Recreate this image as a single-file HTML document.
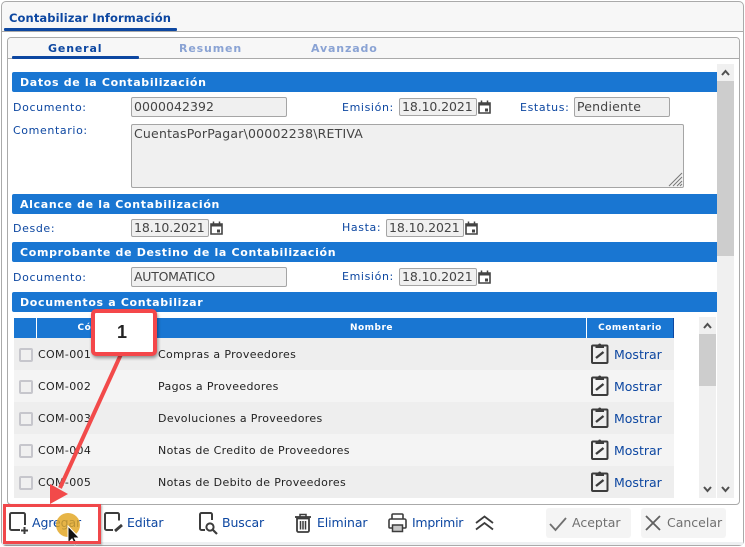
<!DOCTYPE html>
<html><head><meta charset="utf-8">
<style>
html,body{margin:0;padding:0;background:#fff}
#p{position:relative;width:745px;height:547px;overflow:hidden;background:#fff;font-family:"DejaVu Sans",sans-serif}
#p div,#p span.a{position:absolute;box-sizing:border-box;white-space:nowrap}
.sec{left:12px;width:705px;height:20px;background:#1976d2;color:#fff;font:bold 11px/22px "DejaVu Sans",sans-serif;letter-spacing:.66px;padding-left:8px;border-radius:2px 0 0 2px}
.lb{font:11px/14px "DejaVu Sans",sans-serif;letter-spacing:.62px;color:#0d47a1}
.in{background:#f0f0f0;border:1px solid #a5a5a5;border-radius:2px;color:#444;font:12.5px/18px "DejaVu Sans",sans-serif;letter-spacing:-.25px;padding-left:2px;height:20px}
.dt{width:78px;height:18px;line-height:16px;letter-spacing:-.1px}
.row{left:14px;width:660px;height:32px}
.cb{left:19px;width:14px;height:14px;background:#f0f0f0;border:2px solid #c6c6cc;border-radius:2px}
.t{font:11px/14px "DejaVu Sans",sans-serif;color:#222;letter-spacing:.35px}
.m{left:614px;font:12.5px/16px "DejaVu Sans",sans-serif;color:#0d47a1;letter-spacing:0}
.b{font:12.5px/16px "DejaVu Sans",sans-serif;color:#0d47a1;letter-spacing:-.1px}
.th{top:318px;height:20px;background:#1976d2;color:#fff;font:bold 9px/21px "DejaVu Sans",sans-serif;letter-spacing:.5px;text-align:center}
.tab{top:41px;font:bold 11px/16px "DejaVu Sans",sans-serif;letter-spacing:.85px}
svg{position:absolute;overflow:visible}
</style></head><body><div id="p">
<div style="left:1px;top:1px;width:743px;height:545px;border:1px solid #aaa;border-radius:5px;background:#f7f7f7"></div>
<div style="left:2px;top:32px;width:741px;height:510px;background:#fff"></div>
<div style="left:2px;top:542px;width:741px;height:3px;background:#eef0f2"></div>
<div style="left:2px;top:31px;width:741px;height:1px;background:#aaa"></div>
<div style="left:9px;top:10px;font:bold 11.5px/16px 'DejaVu Sans',sans-serif;color:#0d47a1;letter-spacing:.1px">Contabilizar Información</div>
<div style="left:4px;top:28px;width:173px;height:3px;background:#0d47a1;border-radius:1px"></div>

<div style="left:7px;top:37px;width:733px;height:468px;border:1px solid #aaa;border-radius:4px;background:#fff"></div>
<div style="left:8px;top:38px;width:731px;height:21px;background:#f7f7f7;border-bottom:1px solid #aaa;border-radius:3px 3px 0 0"></div>
<div style="left:12px;top:56px;width:127px;height:3px;background:#0d47a1;border-radius:1px"></div>
<div class="tab" style="left:48px;color:#0d47a1">General</div>
<div class="tab" style="left:179px;color:#8aa3d4">Resumen</div>
<div class="tab" style="left:311px;color:#8aa3d4">Avanzado</div>

<div style="left:717px;top:64px;width:17px;height:434px;background:#f0f0f0"></div>
<div style="left:717px;top:81px;width:17px;height:175px;background:#cdcdcd"></div>
<svg style="left:717px;top:64px" width="17" height="17"><path d="M5 11l3.500-4 3.500 4" fill="none" stroke="#505050" stroke-width="2"/></svg>
<svg style="left:717px;top:481px" width="17" height="17"><path d="M5 6l3.500 4 3.500-4" fill="none" stroke="#505050" stroke-width="2"/></svg>

<div class="sec" style="top:72px">Datos de la Contabilización</div>
<div class="lb" style="left:13px;top:101px">Documento:</div>
<div class="in" style="left:131px;top:97px;width:156px;letter-spacing:.05px">0000042392</div>
<div class="lb" style="left:342px;top:101px">Emisión:</div>
<div class="in dt" style="left:399px;top:98px">18.10.2021</div>
<svg style="left:478px;top:100px" width="14" height="14"><path d="M1 3h11v10H1z" fill="none" stroke="#444" stroke-width="1.6"/><path d="M1 2.500h11v3H1z" fill="#444"/><path d="M3.500 0.500v2M9.500 0.500v2" stroke="#444" stroke-width="1.500"/><rect x="7" y="8.500" width="3" height="3" fill="#444"/></svg>
<div class="lb" style="left:520px;top:101px">Estatus:</div>
<div class="in" style="left:574px;top:97px;width:96px;letter-spacing:.2px">Pendiente</div>
<div class="lb" style="left:13px;top:124px">Comentario:</div>
<div class="in" style="left:131px;top:124px;width:553px;height:64px;letter-spacing:.2px">CuentasPorPagar\00002238\RETIVA</div>
<svg style="left:667px;top:171px" width="16" height="16"><path d="M2 15L15 2M6 15l9-9M10 15l5-5M13 15l2-2" stroke="#777" stroke-width="1"/></svg>

<div class="sec" style="top:194px">Alcance de la Contabilización</div>
<div class="lb" style="left:13px;top:222px">Desde:</div>
<div class="in dt" style="left:131px;top:219px">18.10.2021</div>
<svg style="left:210px;top:221px" width="14" height="14"><path d="M1 3h11v10H1z" fill="none" stroke="#444" stroke-width="1.6"/><path d="M1 2.500h11v3H1z" fill="#444"/><path d="M3.500 0.500v2M9.500 0.500v2" stroke="#444" stroke-width="1.500"/><rect x="7" y="8.500" width="3" height="3" fill="#444"/></svg>
<div class="lb" style="left:342px;top:221px">Hasta:</div>
<div class="in dt" style="left:386px;top:219px">18.10.2021</div>
<svg style="left:465px;top:221px" width="14" height="14"><path d="M1 3h11v10H1z" fill="none" stroke="#444" stroke-width="1.6"/><path d="M1 2.500h11v3H1z" fill="#444"/><path d="M3.500 0.500v2M9.500 0.500v2" stroke="#444" stroke-width="1.500"/><rect x="7" y="8.500" width="3" height="3" fill="#444"/></svg>

<div class="sec" style="top:242px">Comprobante de Destino de la Contabilización</div>
<div class="lb" style="left:13px;top:271px">Documento:</div>
<div class="in" style="left:131px;top:267px;width:156px">AUTOMATICO</div>
<div class="lb" style="left:342px;top:270px">Emisión:</div>
<div class="in dt" style="left:399px;top:268px">18.10.2021</div>
<svg style="left:478px;top:270px" width="14" height="14"><path d="M1 3h11v10H1z" fill="none" stroke="#444" stroke-width="1.6"/><path d="M1 2.500h11v3H1z" fill="#444"/><path d="M3.500 0.500v2M9.500 0.500v2" stroke="#444" stroke-width="1.500"/><rect x="7" y="8.500" width="3" height="3" fill="#444"/></svg>

<div class="sec" style="top:292px">Documentos a Contabilizar</div>

<div class="th" style="left:14px;width:22px"></div>
<div class="th" style="left:37px;width:119px">Código</div>
<div class="th" style="left:157px;width:429px">Nombre</div>
<div class="th" style="left:587px;width:87px;border-right:1px solid #0d47a1">Comentario</div>

<div class="row" style="top:338px;background:#eee"></div>
<div class="row" style="top:370px;background:#f4f4f4"></div>
<div class="row" style="top:402px;background:#eee"></div>
<div class="row" style="top:434px;background:#f4f4f4"></div>
<div class="row" style="top:466px;background:#eee"></div>

<div class="cb" style="top:348px"></div><div class="t" style="left:38px;top:348px">COM-001</div><div class="t" style="left:158px;top:348px">Compras a Proveedores</div>
<div class="cb" style="top:380px"></div><div class="t" style="left:38px;top:380px">COM-002</div><div class="t" style="left:158px;top:380px">Pagos a Proveedores</div>
<div class="cb" style="top:412px"></div><div class="t" style="left:38px;top:412px">COM-003</div><div class="t" style="left:158px;top:412px">Devoluciones a Proveedores</div>
<div class="cb" style="top:444px"></div><div class="t" style="left:38px;top:444px">COM-004</div><div class="t" style="left:158px;top:444px">Notas de Credito de Proveedores</div>
<div class="cb" style="top:476px"></div><div class="t" style="left:38px;top:476px">COM-005</div><div class="t" style="left:158px;top:476px">Notas de Debito de Proveedores</div>

<svg style="left:591px;top:342px" width="18" height="22"><path d="M5 3.500H2a1 1 0 0 0-1 1v15.500a1 1 0 0 0 1 1h13.500a1 1 0 0 0 1-1V4.500a1 1 0 0 0-1-1h-3" fill="none" stroke="#3c3c3c" stroke-width="2"/><path d="M4.500 6V2.500h2.700a1.600 1.600 0 0 1 3 0h2.800V6z" fill="#3c3c3c"/><path d="M5 16l7.500-6" stroke="#3c3c3c" stroke-width="2.400"/></svg><div class="m" style="top:347px">Mostrar</div>
<svg style="left:591px;top:374px" width="18" height="22"><path d="M5 3.500H2a1 1 0 0 0-1 1v15.500a1 1 0 0 0 1 1h13.500a1 1 0 0 0 1-1V4.500a1 1 0 0 0-1-1h-3" fill="none" stroke="#3c3c3c" stroke-width="2"/><path d="M4.500 6V2.500h2.700a1.600 1.600 0 0 1 3 0h2.800V6z" fill="#3c3c3c"/><path d="M5 16l7.500-6" stroke="#3c3c3c" stroke-width="2.400"/></svg><div class="m" style="top:379px">Mostrar</div>
<svg style="left:591px;top:406px" width="18" height="22"><path d="M5 3.500H2a1 1 0 0 0-1 1v15.500a1 1 0 0 0 1 1h13.500a1 1 0 0 0 1-1V4.500a1 1 0 0 0-1-1h-3" fill="none" stroke="#3c3c3c" stroke-width="2"/><path d="M4.500 6V2.500h2.700a1.600 1.600 0 0 1 3 0h2.800V6z" fill="#3c3c3c"/><path d="M5 16l7.500-6" stroke="#3c3c3c" stroke-width="2.400"/></svg><div class="m" style="top:411px">Mostrar</div>
<svg style="left:591px;top:438px" width="18" height="22"><path d="M5 3.500H2a1 1 0 0 0-1 1v15.500a1 1 0 0 0 1 1h13.500a1 1 0 0 0 1-1V4.500a1 1 0 0 0-1-1h-3" fill="none" stroke="#3c3c3c" stroke-width="2"/><path d="M4.500 6V2.500h2.700a1.600 1.600 0 0 1 3 0h2.800V6z" fill="#3c3c3c"/><path d="M5 16l7.500-6" stroke="#3c3c3c" stroke-width="2.400"/></svg><div class="m" style="top:443px">Mostrar</div>
<svg style="left:591px;top:470px" width="18" height="22"><path d="M5 3.500H2a1 1 0 0 0-1 1v15.500a1 1 0 0 0 1 1h13.500a1 1 0 0 0 1-1V4.500a1 1 0 0 0-1-1h-3" fill="none" stroke="#3c3c3c" stroke-width="2"/><path d="M4.500 6V2.500h2.700a1.600 1.600 0 0 1 3 0h2.800V6z" fill="#3c3c3c"/><path d="M5 16l7.500-6" stroke="#3c3c3c" stroke-width="2.400"/></svg><div class="m" style="top:475px">Mostrar</div>

<div style="left:699px;top:317px;width:17px;height:181px;background:#f0f0f0"></div>
<div style="left:699px;top:334px;width:17px;height:52px;background:#cdcdcd"></div>
<svg style="left:699px;top:317px" width="17" height="17"><path d="M5 11l3.500-4 3.500 4" fill="none" stroke="#505050" stroke-width="2"/></svg>
<svg style="left:699px;top:481px" width="17" height="17"><path d="M5 6l3.500 4 3.500-4" fill="none" stroke="#505050" stroke-width="2"/></svg>

<svg style="left:9px;top:512px" width="20" height="24"><path d="M11 18H2.500a1.500 1.500 0 0 1-1.500-1.500V2.500A1.500 1.500 0 0 1 2.500 1h12A1.500 1.500 0 0 1 16 2.500V13" fill="none" stroke="#3c3c3c" stroke-width="2"/><path d="M15.500 15v7M12 18.500h7" stroke="#3c3c3c" stroke-width="2"/></svg>
<div class="b" style="left:32px;top:515px">Agregar</div>
<svg style="left:104px;top:512px" width="20" height="24"><path d="M9 18H2.500A1.500 1.500 0 0 1 1 16.500V2.500A1.500 1.500 0 0 1 2.500 1h11A1.500 1.500 0 0 1 15 2.500v6" fill="none" stroke="#3c3c3c" stroke-width="2"/><path d="M11 19l7-6" stroke="#3c3c3c" stroke-width="2.800"/></svg>
<div class="b" style="left:127px;top:515px">Editar</div>
<svg style="left:199px;top:512px" width="20" height="24"><path d="M6 18H2.500A1.500 1.500 0 0 1 1 16.500V2.500A1.500 1.500 0 0 1 2.500 1h9A1.500 1.500 0 0 1 13 2.500V8" fill="none" stroke="#3c3c3c" stroke-width="2"/><circle cx="11" cy="15" r="3.600" fill="none" stroke="#3c3c3c" stroke-width="2"/><path d="M14 18l4 4" stroke="#3c3c3c" stroke-width="2.200"/></svg>
<div class="b" style="left:222px;top:515px">Buscar</div>
<svg style="left:294px;top:513px" width="18" height="20"><path d="M1 4h16" stroke="#3c3c3c" stroke-width="1.800"/><path d="M6 3.500V1.500h6v2" fill="none" stroke="#3c3c3c" stroke-width="1.500"/><path d="M3 5.500h12v12a1.500 1.500 0 0 1-1.500 1.500h-9A1.500 1.500 0 0 1 3 17.500z" fill="none" stroke="#3c3c3c" stroke-width="1.800"/><path d="M6.500 8v8.500M9 8v8.500M11.500 8v8.500" stroke="#3c3c3c" stroke-width="1.500"/></svg>
<div class="b" style="left:317px;top:515px">Eliminar</div>
<svg style="left:388px;top:513px" width="20" height="20"><path d="M4 6V2a1 1 0 0 1 1-1h9a1 1 0 0 1 1 1v4" fill="none" stroke="#3c3c3c" stroke-width="1.600"/><path d="M5 15H2a1 1 0 0 1-1-1V7.500a1.500 1.500 0 0 1 1.500-1.500h14A1.500 1.500 0 0 1 18 7.500V14a1 1 0 0 1-1 1h-3" fill="none" stroke="#3c3c3c" stroke-width="1.600"/><rect x="4.500" y="12" width="10" height="6.500" fill="#c8c8c8" stroke="#3c3c3c" stroke-width="1.500"/></svg>
<div class="b" style="left:412px;top:515px;letter-spacing:-.25px">Imprimir</div>
<svg style="left:474px;top:514px" width="20" height="18"><path d="M2 9l8.500-6.500L19 9M2 15.500L10.500 9 19 15.500" fill="none" stroke="#3c3c3c" stroke-width="1.800"/></svg>

<div style="left:546px;top:508px;width:85px;height:30px;background:#f4f4f4;border-radius:3px"></div>
<svg style="left:549px;top:516px" width="18" height="16"><path d="M1 8l5.500 6L17 2" fill="none" stroke="#707070" stroke-width="1.800"/></svg>
<div class="b" style="left:572px;top:515px;color:#707070;letter-spacing:0">Aceptar</div>
<div style="left:641px;top:508px;width:85px;height:30px;background:#f4f4f4;border-radius:3px"></div>
<svg style="left:645px;top:515px" width="16" height="16"><path d="M1 1l14 14M15 1L1 15" stroke="#606060" stroke-width="1.800"/></svg>
<div class="b" style="left:667px;top:515px;color:#707070;letter-spacing:0">Cancelar</div>

<div style="left:56px;top:513px;width:24px;height:24px;border-radius:50%;background:rgba(226,165,30,.82)"></div>
<svg style="left:0;top:0" width="745" height="547">
<path d="M122 352L60 488" stroke="#f24a4a" stroke-width="4" fill="none"/>
<path d="M50 504V484l18 10z" fill="#f24a4a"/>
<path d="M68 526v17l4-4 3 6 2.500-1-3-6h5z" fill="#111" stroke="#fff" stroke-width="1"/>
</svg>
<div style="left:3px;top:504px;width:98px;height:40px;border:3px solid #f0474a;box-shadow:1px 1px 2px rgba(0,0,0,.3)"></div>
<div style="left:91px;top:309px;width:66px;height:47px;background:#fff;border:4px solid #f4474a;border-radius:5px;box-shadow:1px 2px 3px rgba(0,0,0,.4);color:#222;font:bold 18px/38px 'Liberation Sans',sans-serif;text-align:center;padding-right:4px">1</div>
</div></body></html>
